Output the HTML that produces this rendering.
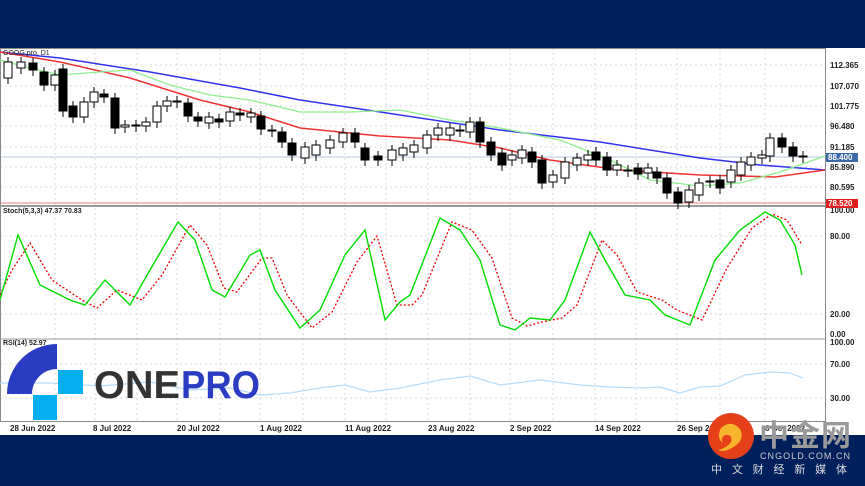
<!DOCTYPE html>
<html><head><meta charset="utf-8"><style>
html,body{margin:0;padding:0;width:865px;height:486px;overflow:hidden;background:#fff;font-family:"Liberation Sans",sans-serif}
svg{position:absolute;left:0;top:0}
</style></head><body>
<svg width="865" height="486" viewBox="0 0 865 486" xmlns="http://www.w3.org/2000/svg" font-family="Liberation Sans, sans-serif">
<rect x="0" y="0" width="865" height="48" fill="#00205c"/>
<rect x="0" y="48" width="865" height="387" fill="#fff"/>
<rect x="0" y="435" width="865" height="51" fill="#00205c"/>
<g stroke="#ccc" stroke-dasharray="2,3" stroke-width="0.7">
<line x1="95" y1="48" x2="95" y2="422"/><line x1="177" y1="48" x2="177" y2="422"/><line x1="260" y1="48" x2="260" y2="422"/><line x1="345" y1="48" x2="345" y2="422"/><line x1="428" y1="48" x2="428" y2="422"/><line x1="510" y1="48" x2="510" y2="422"/><line x1="595" y1="48" x2="595" y2="422"/><line x1="677" y1="48" x2="677" y2="422"/><line x1="765" y1="48" x2="765" y2="422"/><line x1="55" y1="48" x2="55" y2="422"/><line x1="137" y1="48" x2="137" y2="422"/><line x1="220" y1="48" x2="220" y2="422"/><line x1="303" y1="48" x2="303" y2="422"/><line x1="386" y1="48" x2="386" y2="422"/><line x1="470" y1="48" x2="470" y2="422"/><line x1="553" y1="48" x2="553" y2="422"/><line x1="636" y1="48" x2="636" y2="422"/><line x1="720" y1="48" x2="720" y2="422"/>
<line x1="0" y1="65" x2="825" y2="65"/><line x1="0" y1="86" x2="825" y2="86"/><line x1="0" y1="106" x2="825" y2="106"/><line x1="0" y1="126" x2="825" y2="126"/><line x1="0" y1="147" x2="825" y2="147"/><line x1="0" y1="167" x2="825" y2="167"/><line x1="0" y1="187" x2="825" y2="187"/>
<line x1="0" y1="236" x2="825" y2="236"/><line x1="0" y1="314" x2="825" y2="314"/><line x1="0" y1="364" x2="825" y2="364"/><line x1="0" y1="398" x2="825" y2="398"/>
</g>
<line x1="0" y1="157" x2="825" y2="157" stroke="#b8c8e0" stroke-width="1"/>
<line x1="0" y1="203" x2="825" y2="203" stroke="#f08080" stroke-width="1"/>
<rect x="0.5" y="48.5" width="825" height="373" fill="none" stroke="#888" stroke-width="1"/>
<line x1="0" y1="206" x2="825" y2="206" stroke="#999" stroke-width="2"/>
<line x1="0" y1="339" x2="825" y2="339" stroke="#999" stroke-width="1"/>
<polyline fill="none" stroke="#3333ee" stroke-width="1.5" points="0,52 60,58 150,72 240,88 300,100 400,115 500,130 600,142 700,158 760,165 825,170"/>
<polyline fill="none" stroke="#ee3333" stroke-width="1.5" points="0,52 60,62 130,78 200,100 250,112 300,128 380,136 450,140 500,148 550,160 620,170 700,175 775,177 825,170"/>
<polyline fill="none" stroke="#90ee90" stroke-width="1.3" points="0,60 30,68 60,75 100,72 130,70 170,85 210,95 250,100 300,112 350,112 400,110 450,120 500,128 560,140 610,160 650,180 700,186 740,183 780,172 825,156"/>
<g id="c" stroke="#000" stroke-width="1"></g>
<polyline fill="none" stroke="#e00" stroke-width="1.3" stroke-dasharray="2,2" points="0,295 12,270 30,243 52,280 82,300 97,308 117,290 142,300 162,275 190,225 207,245 224,288 237,292 262,258 272,258 287,295 312,328 332,312 357,262 377,236 397,305 412,305 422,295 452,222 472,230 492,258 512,318 527,326 542,322 562,318 577,305 602,240 617,255 637,292 662,300 677,310 702,320 727,268 752,228 772,214 787,220 802,245"/>
<polyline fill="none" stroke="#00dd00" stroke-width="1.4" points="0,300 18,235 40,285 70,300 85,305 105,280 130,305 150,270 178,222 195,240 212,290 225,297 250,255 260,250 275,290 300,328 320,310 345,255 365,230 385,320 400,302 410,295 440,218 460,230 480,260 500,325 515,330 530,318 550,320 565,300 590,232 605,260 625,295 650,300 665,315 690,325 715,260 740,230 765,212 780,220 795,245 802,275"/>
<polyline fill="none" stroke="#b8dcf8" stroke-width="1.2" points="0,383 50,383 100,386 150,382 190,390 230,388 260,395 290,393 320,388 345,385 370,392 400,388 440,380 470,376 500,385 540,380 580,385 610,387 640,388 660,387 680,393 700,387 720,386 745,375 770,372 790,373 803,378"/>
<g font-size="8" font-weight="bold" fill="#222">
<text x="830" y="68">112.365</text><text x="830" y="89">107.070</text><text x="830" y="109">101.775</text><text x="830" y="129">96.480</text><text x="830" y="150">91.185</text><text x="830" y="170">85.890</text><text x="830" y="190">80.595</text>
<text x="830" y="213">100.00</text><text x="830" y="239">80.00</text><text x="830" y="317">20.00</text><text x="830" y="337">0.00</text>
<text x="830" y="345">100.00</text><text x="830" y="367">70.00</text><text x="830" y="401">30.00</text>
<text x="10" y="431">28 Jun 2022</text><text x="93" y="431">8 Jul 2022</text><text x="177" y="431">20 Jul 2022</text><text x="260" y="431">1 Aug 2022</text><text x="345" y="431">11 Aug 2022</text><text x="428" y="431">23 Aug 2022</text><text x="510" y="431">2 Sep 2022</text><text x="595" y="431">14 Sep 2022</text><text x="677" y="431">26 Sep 2022</text><text x="765" y="431">6 Oct 2022</text>
</g>
<rect x="826" y="153" width="32" height="9" fill="#3a6aa8"/><text x="828" y="160" font-size="8" font-weight="bold" fill="#fff">88.400</text>
<rect x="826" y="199" width="32" height="9" fill="#e02020"/><text x="828" y="206" font-size="8" font-weight="bold" fill="#fff">78.520</text>
<text x="3" y="55" font-size="7" fill="#222">GOOG.pro, D1</text>
<text x="3" y="213" font-size="7" font-weight="bold" fill="#222">Stoch(5,3,3) 47.37 70.83</text>
<text x="3" y="345" font-size="7" font-weight="bold" fill="#222">RSI(14) 52.97</text>
<path d="M57,344 L57,369 A25,25 0 0 0 32,394 L7,394 A50,50 0 0 1 57,344 Z" fill="#2a3dc2"/>
<rect x="58" y="370" width="25" height="24" fill="#05aeef"/>
<rect x="33" y="395" width="24" height="25" fill="#05aeef"/>
<text x="94" y="398" font-size="39" font-weight="bold" fill="#333" textLength="86" lengthAdjust="spacingAndGlyphs">ONE</text>
<text x="181" y="398" font-size="39" font-weight="bold" fill="#2a3dc2" textLength="79" lengthAdjust="spacingAndGlyphs">PRO</text>
<circle cx="731" cy="436" r="23" fill="#e5401a"/>
<path d="M721,428 q10,-9 19,1 q5,10 -5,17 q-10,7 -17,4 q9,-2 13,-8 q2,-8 -6,-7 q-5,3 -2,8 q-7,-5 -2,-15z" fill="#f7b52c"/>
<text x="759" y="446" font-size="30" font-weight="bold" fill="#9a9a9a" font-family="Noto Sans CJK SC, sans-serif" textLength="92">中金网</text>
<text x="760" y="459" font-size="9" fill="#ccc" textLength="90">CNGOLD.COM.CN</text>
<text x="711" y="473" font-size="11" fill="#ddd" font-family="Noto Sans CJK SC, sans-serif" textLength="136">中文财经新媒体</text>
</svg>
<script>
var d=[[8,62,78,1],[21,62,68,1],[33,63,70,0],[44,72,85,0],[55,75,85,1],[63,69,111,0],[73,106,117,0],[84,102,117,1],[94,92,102,1],[104,94,97,0],[115,98,128,0],[125,125,127,1],[136,125,126,1],[146,122,126,1],[157,106,122,1],[167,101,106,1],[177,101,102,1],[188,103,116,0],[198,117,121,0],[209,117,123,1],[219,119,122,0],[230,112,121,1],[240,113,115,0],[251,113,117,1],[261,116,129,0],[272,130,131,1],[282,132,142,0],[292,143,155,0],[305,147,158,1],[316,145,155,1],[330,140,148,1],[343,133,142,1],[355,133,142,0],[365,148,160,0],[378,156,160,0],[392,150,160,1],[403,148,155,1],[414,145,152,1],[427,135,148,1],[438,128,135,1],[450,128,135,1],[460,130,131,1],[470,122,132,1],[480,122,142,0],[491,142,155,0],[502,153,165,0],[512,155,160,1],[522,150,158,1],[532,152,162,0],[542,160,183,0],[553,175,182,1],[565,162,178,1],[577,158,165,1],[588,155,160,1],[596,152,160,0],[607,157,170,0],[617,165,170,1],[628,170,171,1],[638,168,174,0],[648,168,173,1],[657,172,178,0],[667,178,193,0],[678,192,203,0],[689,190,202,1],[699,183,195,1],[710,181,182,1],[720,180,188,0],[731,170,182,1],[741,162,175,1],[751,157,165,1],[762,155,158,1],[770,138,156,1],[782,138,147,0],[793,147,156,0],[803,156,157,1]];
var s='';d.forEach(function(c){var h=c[2]-c[1];s+='<line x1="'+c[0]+'" y1="'+(c[1]-5)+'" x2="'+c[0]+'" y2="'+(c[2]+6)+'"/>';s+='<rect x="'+(c[0]-4)+'" y="'+c[1]+'" width="8" height="'+Math.max(h,1)+'" fill="'+(c[3]?'#fff':'#000')+'"/>';});
document.getElementById('c').innerHTML=s;
</script>
</body></html>
